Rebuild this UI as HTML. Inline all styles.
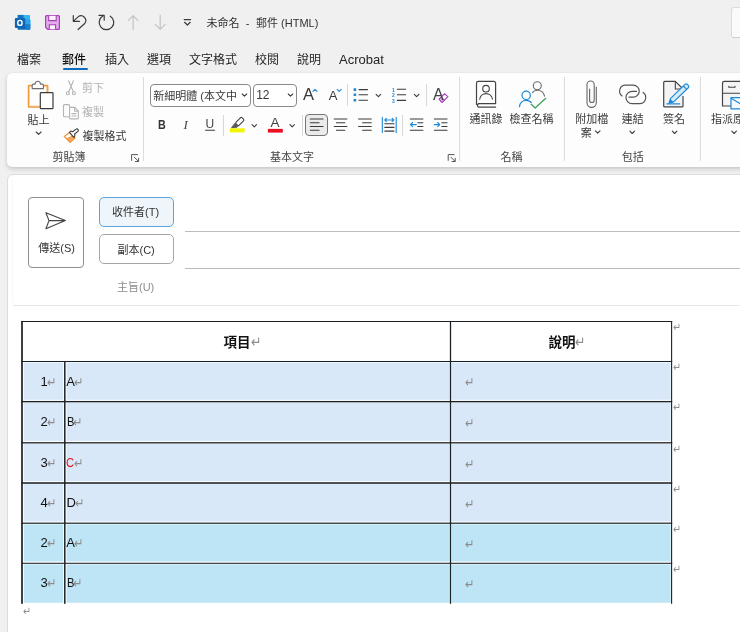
<!DOCTYPE html>
<html lang="zh-Hant">
<head>
<meta charset="utf-8">
<title>未命名 - 郵件 (HTML)</title>
<style>
*{box-sizing:border-box;margin:0;padding:0}
html,body{width:740px;height:632px;overflow:hidden}
body{position:relative;background:#f0f0f0;font-family:"Liberation Sans","Noto Sans CJK TC",sans-serif;font-size:12px;color:#242424}
.t{position:absolute;white-space:nowrap;line-height:16px;height:16px}
.g{color:#a6a6a6}
.abs{position:absolute}
svg{position:absolute;overflow:visible}
#ribbon{position:absolute;left:7px;top:73px;width:760px;height:94px;background:#fdfdfd;border-radius:5px;box-shadow:0 2px 4px rgba(0,0,0,.17),0 0 1px rgba(0,0,0,.14)}
.vsep{position:absolute;width:1px;background:#dcdcdc}
#compose{position:absolute;left:7px;top:173.500px;width:760px;height:480px;background:#fff;border:1px solid #dcdcdc;border-radius:6px}
.combo{position:absolute;height:23px;border:1px solid #8a8a8a;border-radius:4px;background:#fff}
.btn{position:absolute;border:1px solid #b0b0b0;border-radius:4px;background:#fff}
.hl{position:absolute;height:1px;background:#cfcfcf}
.pm{position:absolute;font-family:"DejaVu Sans",sans-serif;font-size:14px;line-height:16px;height:16px;color:#8c8c8c;transform:scaleX(.8);transform-origin:0 0}
.pm2{font-size:12px}
.pm3{font-size:15.500px}
.doc{position:absolute;white-space:nowrap;font-size:13px;line-height:16px;color:#111}
.ic{fill:none;stroke:#3b3b3b;stroke-width:1.1;stroke-linecap:round;stroke-linejoin:round}
#all{position:absolute;left:0;top:0;width:740px;height:632px;will-change:transform}
.r{position:absolute;white-space:nowrap;font-size:11px;line-height:14px;height:14px;color:#383838}
.rg{color:#b3b3b3}
.rl{color:#444}
.o{fill:none;stroke:#f0953a;stroke-width:1.2;stroke-linejoin:round;stroke-linecap:round}
.d{fill:none;stroke:#3b3b3b;stroke-width:1.1;stroke-linejoin:round;stroke-linecap:round}
.gy{fill:none;stroke:#b4b4b4;stroke-width:1.1;stroke-linejoin:round;stroke-linecap:round}
.bl{fill:none;stroke:#1e88d8;stroke-width:1.1;stroke-linejoin:round;stroke-linecap:round}
.ch{fill:none;stroke:#3b3b3b;stroke-width:1.1;stroke-linejoin:round;stroke-linecap:round}
</style>
</head>
<body>
<div id="all">
<!-- TITLE BAR -->
<svg width="740" height="40" style="left:0;top:0">
 <!-- outlook -->
 <g transform="translate(14.500,14.500)">
  <path d="M3.200 .4h11.300a1 1 0 0 1 1 1v4.200H3.200z" fill="#31b6ee"/>
  <path d="M3.200 .4h5.800v5.200H3.200z" fill="#1272c4"/>
  <rect x="3.200" y="5.200" width="12.600" height="5" fill="#1c8fe0"/>
  <rect x="10" y="5.200" width="5.800" height="5" fill="#2aa6ea"/>
  <path d="M3.200 10h12.600v4.200a1 1 0 0 1-1 1H3.200z" fill="#0f6cbd"/>
  <path d="M9 10h6.800v4.200a1 1 0 0 1-1 1H12.500z" fill="#1681d4"/>
  <rect x=".4" y="3.400" width="10.300" height="10" rx="1" fill="#0f64b4"/>
  <ellipse cx="5.400" cy="8.400" rx="2.200" ry="2.500" fill="none" stroke="#fff" stroke-width="1.400"/>
 </g>
 <!-- save -->
 <g transform="translate(45,15)">
  <path d="M1.600.6h11.800a1 1 0 0 1 1 1v11.800a1 1 0 0 1-1 1H2.800L.6 12.200V1.600a1 1 0 0 1 1-1z" fill="#e4abec" stroke="#a93dbb" stroke-width="1.200"/>
  <path d="M3.700.8v4.800h7.500v-4.800" fill="#fdf3fe" stroke="#a93dbb" stroke-width="1.100"/>
  <path d="M4.300 14.300v-4.500h6.300v4.500" fill="#fdf3fe" stroke="#a93dbb" stroke-width="1.100"/>
 </g>
 <!-- undo -->
 <path class="ic" d="M73.3 15.6v5.7h6.2M73.5 21.1l4.6-4.2a4.7 4.7 0 0 1 6.6 6.6l-6.6 6" style="stroke-width:1.2"/>
 <!-- redo -->
 <path class="ic" d="M99 15.4h5.2v4.8M110.3 16.2A7.3 7.3 0 1 1 102.8 16.1" style="stroke-width:1.2"/>
 <!-- up / down -->
 <path class="ic" d="M133.1 29.6V15.6M128.2 20.6l4.9-5 4.9 5" style="stroke:#c4c4c4;stroke-width:1.2"/>
 <path class="ic" d="M160.2 15.4V29.4M155.3 24.4l4.9 5 4.9-5" style="stroke:#c4c4c4;stroke-width:1.2"/>
 <!-- customize -->
 <path class="ic" d="M184.2 19.6h6.4M184.6 22.3l2.8 2.7 2.8-2.7" style="stroke-width:1.2"/>
</svg>
<span class="t" style="left:206.500px;top:14.500px;font-size:11px;color:#333">未命名</span><span class="t" style="left:245.800px;top:14.500px;font-size:11px;color:#333">-</span><span class="t" style="left:256px;top:14.500px;font-size:11px;color:#333">郵件 (HTML)</span>
<div class="abs" style="left:731px;top:7px;width:20px;height:31px;background:#fafafa;border:1px solid #dcdcdc;border-bottom-color:#cfcfcf;border-radius:3px"></div>

<!-- TABS -->
<span class="t" style="left:17px;top:52.400px">檔案</span>
<span class="t" style="left:62px;top:52.400px;color:#111;font-weight:500">郵件</span>
<div class="abs" style="left:63px;top:68px;width:24.700px;height:2px;background:#0f6cbd;border-radius:1px"></div>
<span class="t" style="left:105px;top:52.400px">插入</span>
<span class="t" style="left:147px;top:52.400px">選項</span>
<span class="t" style="left:189px;top:52.400px">文字格式</span>
<span class="t" style="left:255px;top:52.400px">校閱</span>
<span class="t" style="left:297px;top:52.400px">說明</span>
<span class="t" style="left:339px;top:52.400px;font-size:13px">Acrobat</span>
<!-- RIBBON -->
<div id="ribbon"></div>
<svg width="740" height="170" style="left:0;top:0">
<!-- ===== clipboard group ===== -->
 <!-- paste -->
 <path class="o" d="M32 85.700h-2.800a.5.5 0 0 0-.5.5v20.200a.5.5 0 0 0 .5.5h10.300M43.600 85.700h3.400a.5.5 0 0 1 .5.5v5.800" style="stroke-width:1.900;stroke:#ee9a3c"/>
 <path d="M32 86.600h-2.500v19.400h10M43.600 86.600h3.100v5.400" fill="none" stroke="#fbd7a6" stroke-width=".8"/>
 <path d="M32.2 88.6v-3.5a1 1 0 0 1 1-1h1.9c.2-1.6 1.3-2.8 2.7-2.8s2.5 1.2 2.7 2.8h1.9a1 1 0 0 1 1 1v3.5z" fill="#fff" stroke="#6e6e6e" stroke-width="1.1" stroke-linejoin="round"/>
 <rect x="40.3" y="92.7" width="12.7" height="16" rx="0.8" fill="#fff" stroke="#3b3b3b" stroke-width="1.2"/>
 <path class="ch" d="M36.2 132l2.4 2.3 2.4-2.3"/>
 <!-- cut -->
 <path class="gy" d="M68.600 80.800l4.700 11M73.400 80.800l-4.700 11"/>
 <circle class="gy" cx="67.9" cy="93.3" r="1.5"/><circle class="gy" cx="73.9" cy="93.3" r="1.5"/>
 <!-- copy -->
 <path class="gy" d="M69.3 116.8h-4.8a1 1 0 0 1-1-1v-10.2a1 1 0 0 1 1-1h4a1 1 0 0 1 1 1v1.4"/>
 <path class="gy" d="M69.6 107.4h5.2l3.5 3.5v7a1 1 0 0 1-1 1h-6.700a1 1 0 0 1-1-1z" style="fill:#fff"/>
 <path class="gy" d="M74.6 107.6v3.5h3.5M71.8 113.6h4.3M71.8 116h4.3"/>
 <!-- format painter -->
 <path d="M64.300 136.400l5.200-4 5.600 5.700-5 4.300z" fill="#fff" stroke="#f0953a" stroke-width="1.200" stroke-linejoin="round"/>
 <path d="M64.300 136.400l2.300 2.300 6-2.600 2.500 2-5 4.300z" fill="#f4a960" stroke="#f0953a" stroke-width="1" stroke-linejoin="round"/>
 <path d="M69.500 132.400l1.400-1.300 1.700.6 3.500-2.600a1.200 1.200 0 0 1 1.700.2l.3.400a1.200 1.200 0 0 1-.2 1.700l-3.300 2.600.3 1.900-1.100 1.400z" fill="#fff" stroke="#3b3b3b" stroke-width="1.100" stroke-linejoin="round"/>
 <!-- launcher -->
 <path class="d" d="M131.600 160.400v-5.800h5.900M134.400 157.300l4 4M138.600 158.300v3.200h-3.200" style="stroke:#555;stroke-width:1"/>
</svg>
<span class="r" style="left:27.500px;top:113px">貼上</span>
<span class="r rg" style="left:82px;top:80.5px">剪下</span>
<span class="r rg" style="left:82px;top:105px">複製</span>
<span class="r" style="left:82.500px;top:129px">複製格式</span>
<span class="r rl" style="left:52.500px;top:149.500px">剪貼簿</span>
<div class="vsep" style="left:143px;top:77px;height:84px"></div>
<!-- ===== basic text group ===== -->
<div class="combo" style="left:150px;top:84px;width:100.500px;height:22.500px"></div>
<div class="combo" style="left:253px;top:84px;width:43.500px;height:22.500px"></div>
<span class="r" style="left:153.300px;top:88.500px">新細明體 (本文中</span>
<span class="r" style="left:256.200px;top:88.300px;font-size:12px">12</span>
<div class="abs" style="left:305px;top:114px;width:22.500px;height:22px;border:1.200px solid #757575;border-radius:4px;background:#ebebeb"></div>
<svg width="740" height="170" style="left:0;top:0">
 <!-- combo chevrons -->
 <path class="ch" d="M242.300 94l2.200 2.200 2.200-2.200M288.300 94l2.200 2.200 2.200-2.200"/>
 <!-- grow/shrink carets -->
 <path class="bl" d="M313 91.300l2-2 2 2M337.200 89.300l2 2 2-2"/>
 <!-- seps -->
 <path d="M347.500 84v22M426.500 84v22M223.500 115v21M302.500 115v21M402.500 115v21" stroke="#d8d8d8" stroke-width="1" fill="none"/>
 <!-- bullets -->
 <path d="M353.600 88.300h2.600v2.600h-2.600zM353.600 93.400h2.600v2.600h-2.600zM353.600 98.900h2.600v2.600h-2.600z" fill="#1e88d8"/>
 <path class="d" d="M359 89.600h8.500M359 94.700h8.500M359 100.200h8.500"/>
 <path class="ch" d="M376.100 94.400l2.300 2.300 2.300-2.300M414.300 94.400l2.300 2.300 2.300-2.300"/>
 <!-- numbering lines -->
 <path class="d" d="M397.300 89.200h8.300M397.300 94.800h8.300M397.300 100.400h8.300"/>
 <!-- eraser -->
 <path d="M439.100 99.200l5.300-5.400 3.500 2.800-5.900 5.900z" fill="#fff" stroke="#a83bbd" stroke-width="1.100" stroke-linejoin="round"/>
 <path d="M439.100 99.200l2.100-2.200 3.200 3.100-2.400 2.400z" fill="#d7a3e0" stroke="#a83bbd" stroke-width="1" stroke-linejoin="round"/>
 <!-- U underline -->
 <path class="d" d="M205.600 130.300h8.900"/>
 <!-- highlighter -->
 <path d="M235.200 123l3.100 3.100-2 1.600-4.900.200 1.700-2.500z" fill="#5c5c5c" stroke="#4a4a4a" stroke-width=".6" stroke-linejoin="round"/>
 <rect x="-4.300" y="-2.200" width="8.600" height="4.400" rx="1.300" transform="translate(239.800,121.500) rotate(-45)" fill="#fff" stroke="#444" stroke-width="1.100"/>
 <rect x="229.900" y="128.300" width="14.700" height="4.100" fill="#f2f500"/>
 <path class="ch" d="M252.100 124.700l2.200 2.200 2.200-2.200M290 124.700l2.200 2.200 2.200-2.200"/>
 <!-- font colour bar -->
 <rect x="267.900" y="128.900" width="14.900" height="3.700" fill="#e81123"/>
 <!-- align left/center/right -->
 <path class="d" d="M310.300 119h12.700M310.300 122.750h8.800M310.300 126.500h12.700M310.300 130.250h8.800"/>
 <path class="d" d="M334.200 119h12.700M336.400 122.750h8.400M334.200 126.500h12.700M336.400 130.250h8.400"/>
 <path class="d" d="M358.600 119h12.700M362.600 122.750h8.700M358.600 126.500h12.700M362.600 130.250h8.700"/>
 <!-- distributed -->
 <path class="bl" d="M382.300 117.300v15.200M396.200 117.300v15.200M384.800 120h9M386.400 118.400l-1.600 1.600 1.600 1.600M392.200 118.400l1.600 1.600-1.600 1.600"/>
 <path class="d" d="M384.800 123.700h9.200M384.800 127.400h9.200M384.800 131.100h9.200"/>
 <!-- decrease indent -->
 <path class="d" d="M410.300 119h12.600M417.800 122.750h5.100M417.800 126.500h5.100M410.300 130.250h12.600"/>
 <path class="bl" d="M410.500 124.600h5.800M412.600 122.500l-2.100 2.100 2.100 2.100"/>
 <!-- increase indent -->
 <path class="d" d="M434.400 119h12.600M441.800 122.750h5.200M441.800 126.500h5.200M434.400 130.250h12.600"/>
 <path class="bl" d="M434.200 124.600h5.600M437.700 122.500l2.100 2.100-2.100 2.100"/>
 <!-- launcher -->
 <path class="d" d="M448.200 160.400v-5.800h5.900M451 157.300l4 4M455.200 158.300v3.200h-3.200" style="stroke:#555;stroke-width:1"/>
</svg>
<span class="r" style="left:303px;top:84px;font-size:16.500px;line-height:20px;height:20px">A</span>
<span class="r" style="left:328.800px;top:86.500px;font-size:13px;line-height:18px;height:18px">A</span>
<span class="r" style="left:433px;top:84.500px;font-size:16px;line-height:19px;height:19px;color:#444">A</span>
<span class="r" style="left:392px;top:86.500px;font-size:5px;line-height:6px;height:6px;color:#1e88d8;font-weight:bold">1</span>
<span class="r" style="left:392px;top:92px;font-size:5px;line-height:6px;height:6px;color:#1e88d8;font-weight:bold">2</span>
<span class="r" style="left:392px;top:97.600px;font-size:5px;line-height:6px;height:6px;color:#1e88d8;font-weight:bold">3</span>
<span class="r" style="left:158px;top:116.500px;font-size:12.500px;line-height:16px;height:16px;font-weight:bold;transform:scaleX(.86);transform-origin:0 0;color:#333">B</span>
<span class="r" style="left:183.600px;top:116.500px;line-height:16px;height:16px;font-style:italic;font-family:'Liberation Serif',serif;font-size:13px;color:#444">I</span>
<span class="r" style="left:205.600px;top:116.300px;font-size:12px;line-height:16px;height:16px;color:#444">U</span>
<span class="r" style="left:270.500px;top:115.100px;font-size:13.500px;line-height:16px;height:16px;color:#444">A</span>
<span class="r rl" style="left:270px;top:149.500px">基本文字</span>
<div class="vsep" style="left:459px;top:77px;height:84px"></div>
<!-- ===== names / include groups ===== -->
<svg width="740" height="170" style="left:0;top:0">
 <!-- address book -->
 <path class="d" d="M476.500 104.500v-21.300a1.800 1.800 0 0 1 1.800-1.800h15.500a1.800 1.800 0 0 1 1.800 1.800v20.400h-17a2 2 0 0 0 0 3.600h17" style="stroke:#444;stroke-width:1.200"/>
 <circle class="d" cx="486" cy="88.700" r="3.300" style="stroke:#444"/>
 <path class="d" d="M479.700 99.200a6.400 6.400 0 0 1 12.700 0" style="stroke:#444"/>
 <!-- check names -->
 <circle class="d" cx="537.300" cy="85.700" r="4" style="stroke:#6a6a6a"/>
 <path class="d" d="M532.400 92.600c1.200-1.600 3-2.300 4.900-2.300 3.400 0 6.300 2.200 7.300 5.800" style="stroke:#6a6a6a"/>
 <circle class="bl" cx="526.200" cy="95.300" r="4.200" style="stroke-width:1.200"/>
 <path class="bl" d="M519.500 106.600c.4-3.800 3.200-6.300 6.700-6.300 2 0 3.800.8 5.100 2.200" style="stroke-width:1.200"/>
 <path d="M531.200 104.300l3.900 3.700 10.700-9.700" fill="none" stroke="#3a9e5c" stroke-width="1.200" stroke-linecap="round" stroke-linejoin="round"/>
 <!-- paperclip -->
 <path class="d" d="M596.300 87v15.700a4.650 4.650 0 0 1-9.300 0v-18.100a3.600 3.600 0 0 1 7.200 0v15.600a2.300 2.300 0 0 1-4.600 0v-11.200" style="stroke:#666;stroke-width:1.100"/>
 <!-- link -->
 <path class="d" d="M629 97.100H633.250A5.950 5.950 0 0 0 633.250 85.200H625.550A5.950 5.950 0 0 0 622.140 96.020" style="stroke:#555;stroke-width:1.200"/>
 <path class="d" d="M636.500 91.400H632.100A6.100 6.100 0 0 0 632.100 103.600H639.600A6.100 6.100 0 0 0 643.100 92.500" style="stroke:#555;stroke-width:1.200"/>
 <!-- signature -->
 <path d="M683 96.400v9.500a1 1 0 0 1-1 1h-17.300a1 1 0 0 1-1-1v-23.500a1 1 0 0 1 1-1h10.600l7.700 7.600v1.200" fill="#f4f4f4" stroke="#444" stroke-width="1.200" stroke-linejoin="round" stroke-linecap="round"/>
 <path class="d" d="M675.300 81.600v7.400h7.500" style="stroke:#444"/>
 <path d="M669 103.200l1.400-4.600 14.600-14.200a1.600 1.600 0 0 1 2.300 0l1 1a1.600 1.600 0 0 1 0 2.300l-14.700 14.200z" fill="#d6ebfa" stroke="#1e88d8" stroke-width="1.200" stroke-linejoin="round"/>
 <path d="M669 103.200l1.300-4.200 3 3z" fill="#1e88d8"/>
 <path class="bl" d="M683.300 86l2.900 2.900M666.800 103.900h13"/>
 <!-- assign policy (clipped) -->
 <path d="M722.500 83.200a1.800 1.800 0 0 1 1.800-1.800h20v24.600h-21.800z" fill="#f4f4f4" stroke="#444" stroke-width="1.200" stroke-linejoin="round"/>
 <path class="d" d="M722.500 93.300h20M728.800 86.300v1h6.200v-1" style="stroke:#444"/>
 <path d="M731 97.700h12v11.200h-12z" fill="#f4faff" stroke="#1e88d8" stroke-width="1.200" stroke-linejoin="round"/>
 <path class="bl" d="M731.200 98.200l9 5.600"/>
 <!-- chevrons -->
 <path class="ch" d="M595.400 130.800l2.300 2.300 2.300-2.300M629.900 131.200l2.300 2.300 2.300-2.300M672.300 131.200l2.300 2.300 2.300-2.300M731.800 131.200l2.300 2.300 2.300-2.300"/>
</svg>
<span class="r" style="left:469.500px;top:111.500px">通訊錄</span>
<span class="r" style="left:509.500px;top:111.500px">檢查名稱</span>
<span class="r rl" style="left:500.500px;top:149.500px">名稱</span>
<div class="vsep" style="left:564px;top:77px;height:84px"></div>
<span class="r" style="left:575.300px;top:111.500px">附加檔</span>
<span class="r" style="left:580.800px;top:125.500px">案</span>
<span class="r" style="left:621.800px;top:111.500px">連結</span>
<span class="r" style="left:663px;top:111.500px">簽名</span>
<span class="r rl" style="left:621.800px;top:149.500px">包括</span>
<div class="vsep" style="left:700px;top:77px;height:84px"></div>
<span class="r" style="left:711px;top:111.500px">指派原</span>
<!-- COMPOSE -->
<div id="compose"></div>
<div class="abs" style="left:12px;top:178px;width:760px;height:127.500px;border:1px solid #e7e7e7;border-left-color:#f9f9f9;border-radius:3px;border-top-color:transparent"></div>
<div class="btn" style="left:28px;top:197px;width:56px;height:71px;border-color:#8f8f8f"></div>
<div class="btn" style="left:99px;top:197px;width:75px;height:30px;border-color:#5ba3dc;background:#eef6fc;border-radius:5px"></div>
<div class="btn" style="left:99px;top:234px;width:75px;height:30px;border-color:#a6a6a6;border-radius:5px"></div>
<div class="hl" style="left:185px;top:230.500px;width:560px;background:#bcbcbc"></div>
<div class="hl" style="left:185px;top:268px;width:560px;background:#bcbcbc"></div>
<svg width="740" height="320" style="left:0;top:0">
 <path class="d" d="M45.900 212.700l19.500 7.900-19.500 8.200 3.100-8.200zM49 220.600h14.500" style="stroke:#444;stroke-width:1.100"/>
</svg>
<span class="r" style="left:38.300px;top:240.500px;color:#333">傳送(S)</span>
<span class="r" style="left:112px;top:205px;color:#333">收件者(T)</span>
<span class="r" style="left:117.500px;top:242.500px;color:#333">副本(C)</span>
<span class="r" style="left:117px;top:279.500px;color:#8c8c8c">主旨(U)</span>
<!-- BODY TABLE -->
<svg width="740" height="632" style="left:0;top:0">
<rect x="22.0" y="361.5" width="649.60" height="161.70" fill="#d9e8f8"/>
<rect x="22.0" y="523.2" width="649.60" height="79.60" fill="#bde5f5"/>
<rect x="22.0" y="359.60" width="649.60" height="3.0" fill="#fbfdff"/>
<rect x="22.0" y="399.75" width="649.60" height="3.0" fill="#fbfdff"/>
<rect x="22.0" y="440.90" width="649.60" height="3.0" fill="#fbfdff"/>
<rect x="22.0" y="481.10" width="649.60" height="3.0" fill="#fbfdff"/>
<rect x="22.0" y="521.30" width="649.60" height="3.0" fill="#fbfdff"/>
<rect x="22.0" y="561.40" width="649.60" height="3.0" fill="#fbfdff"/>
<rect x="22.0" y="361.5" width="1.9" height="241.90" fill="#fbfdff"/>
<rect x="63.10" y="361.5" width="3.5" height="241.90" fill="#fbfdff"/>
<rect x="449.40" y="361.5" width="2.2" height="241.90" fill="#fbfdff"/>
<rect x="670.60" y="361.5" width="1.0" height="241.90" fill="#fbfdff"/>
<rect x="21.20" y="321.00" width="651.00" height="1.0" fill="#1b2125"/>
<rect x="21.20" y="361.00" width="651.00" height="1.0" fill="#1b2125"/>
<rect x="21.20" y="400.97" width="651.00" height="1.35" fill="#1b2125"/>
<rect x="21.20" y="442.15" width="651.00" height="1.3" fill="#1b2125"/>
<rect x="21.20" y="482.23" width="651.00" height="1.55" fill="#1b2125"/>
<rect x="21.20" y="522.60" width="651.00" height="1.2" fill="#1b2125"/>
<rect x="21.20" y="562.77" width="651.00" height="1.05" fill="#1b2125"/>
<rect x="21.15" y="321.10" width="1.7" height="282.70" fill="#1b2125"/>
<rect x="671.05" y="321.10" width="1.1" height="282.70" fill="#1b2125"/>
<rect x="449.85" y="321.50" width="1.3" height="282.30" fill="#1b2125"/>
<rect x="64.05" y="361.50" width="1.5" height="242.30" fill="#1b2125"/>
</svg>
<span class="doc" style="left:223.6px;top:334.5px;font-weight:bold;font-size:13.5px">項目</span><span class="pm pm3" style="left:250.8px;top:334.1px">↵</span>
<span class="doc" style="left:548.4px;top:334.5px;font-weight:bold;font-size:13.5px">說明</span><span class="pm pm3" style="left:575.4px;top:334.1px">↵</span>
<span class="doc" style="left:40.5px;top:373.7px">1</span><span class="pm" style="left:47.1px;top:373.6px">↵</span>
<span class="doc" style="left:66.2px;top:373.7px;">A</span><span class="pm" style="left:74.0px;top:373.6px">↵</span>
<span class="pm" style="left:465.0px;top:374.3px">↵</span>
<span class="doc" style="left:40.5px;top:414.3px">2</span><span class="pm" style="left:47.1px;top:414.2px">↵</span>
<span class="doc" style="left:66.6px;top:414.3px;transform:scaleX(0.86);transform-origin:0 0;">B</span><span class="pm" style="left:72.8px;top:414.2px">↵</span>
<span class="pm" style="left:465.0px;top:414.9px">↵</span>
<span class="doc" style="left:40.5px;top:455.0px">3</span><span class="pm" style="left:47.1px;top:454.9px">↵</span>
<span class="doc" style="left:66.4px;top:455.0px;color:#e8141c;transform:scaleX(0.86);transform-origin:0 0;">C</span><span class="pm" style="left:73.9px;top:454.9px">↵</span>
<span class="pm" style="left:465.0px;top:455.6px">↵</span>
<span class="doc" style="left:40.5px;top:495.2px">4</span><span class="pm" style="left:47.1px;top:495.1px">↵</span>
<span class="doc" style="left:66.4px;top:495.2px;">D</span><span class="pm" style="left:75.4px;top:495.1px">↵</span>
<span class="pm" style="left:465.0px;top:495.8px">↵</span>
<span class="doc" style="left:40.5px;top:535.4px">2</span><span class="pm" style="left:47.1px;top:535.2px">↵</span>
<span class="doc" style="left:66.2px;top:535.4px;">A</span><span class="pm" style="left:74.0px;top:535.2px">↵</span>
<span class="pm" style="left:465.0px;top:535.9px">↵</span>
<span class="doc" style="left:40.5px;top:575.4px">3</span><span class="pm" style="left:47.1px;top:575.3px">↵</span>
<span class="doc" style="left:66.6px;top:575.4px;transform:scaleX(0.86);transform-origin:0 0;">B</span><span class="pm" style="left:72.8px;top:575.3px">↵</span>
<span class="pm" style="left:465.0px;top:576.0px">↵</span>
<span class="pm pm2" style="left:673.2px;top:319.2px">↵</span>
<span class="pm pm2" style="left:673.2px;top:359.2px">↵</span>
<span class="pm pm2" style="left:673.2px;top:399.3px">↵</span>
<span class="pm pm2" style="left:673.2px;top:440.5px">↵</span>
<span class="pm pm2" style="left:673.2px;top:480.7px">↵</span>
<span class="pm pm2" style="left:673.2px;top:520.9px">↵</span>
<span class="pm pm2" style="left:673.2px;top:561.0px">↵</span>
<span class="pm pm2" style="left:22.7px;top:602.7px">↵</span>
</div><!--all-->
</body>
</html>
